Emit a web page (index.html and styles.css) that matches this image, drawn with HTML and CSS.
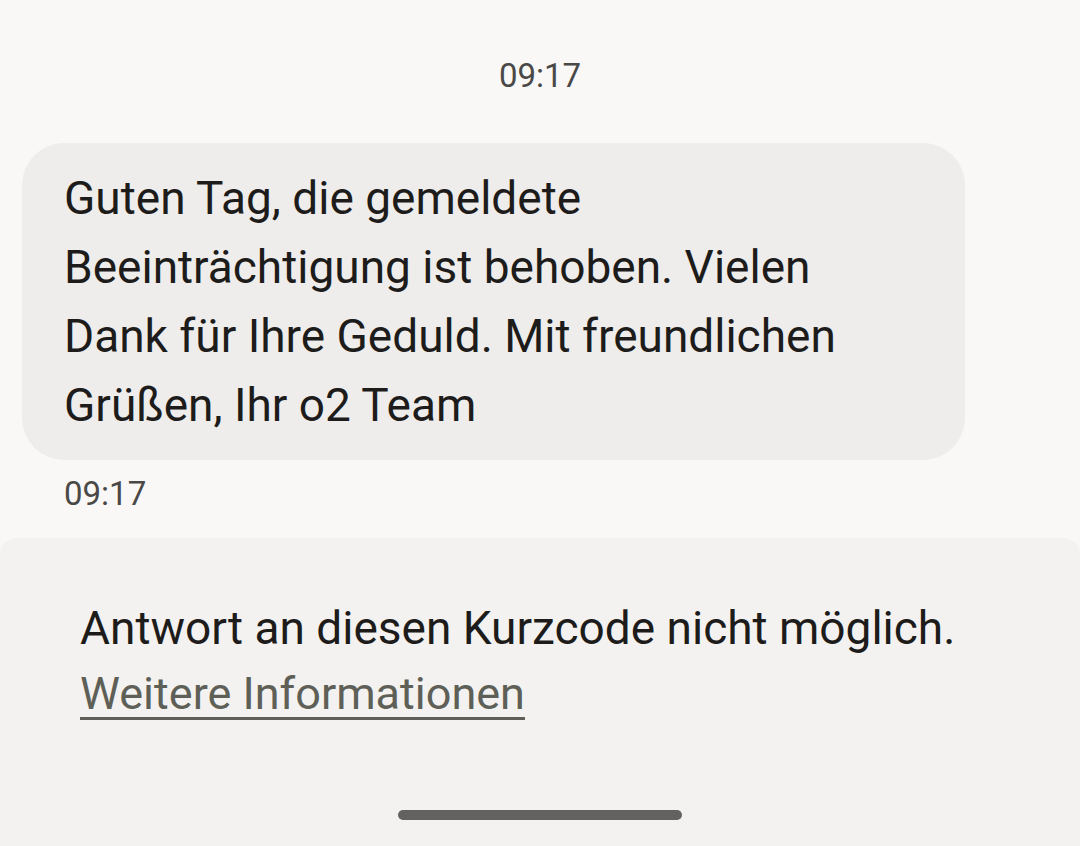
FILE: index.html
```html
<!DOCTYPE html>
<html>

<head>
    <link rel="stylesheet" href="styles.css">
</head>

<body>
    <div class="thread">
        <div class="timeHead">09:17</div>
        <div class="bubble">Guten Tag, die gemeldete<br>Beeinträchtigung ist behoben. Vielen<br>Dank für Ihre Geduld. Mit freundlichen<br>Grüßen, Ihr o2 Team</div>
        <div class="timeMsg">09:17</div>
    </div>
    <div class="panel">
        <div class="notice">Antwort an diesen Kurzcode nicht möglich.</div>
        <a class="moreLink" href="#">Weitere Informationen</a>
        <div class="handle"></div>
    </div>
</body>

</html>
```

FILE: styles.css
```css
html, body {
    margin: 0;
    height: 100%;
}

body {
    background: #f9f8f6;
    font-family: Roboto, "Noto Sans", sans-serif;
    color: #1d1c1b;
    display: flex;
    flex-direction: column;
    overflow: hidden;
}

.thread {
    flex: 1;
    padding: 0 115px 0 22px;
}

.timeHead {
    text-align: center;
    font-size: 33px;
    color: #4a4947;
    margin: 56px 0 0 93px;
    line-height: 40px;
}

.bubble {
    margin-top: 47px;
    background: #eeedeb;
    border-radius: 42px;
    padding: 21px 42px 20px 42px;
    font-size: 46px;
    line-height: 69px;
}

.timeMsg {
    font-size: 33px;
    color: #4a4947;
    margin: 14px 0 0 42px;
    line-height: 40px;
}

.panel {
    height: 308px;
    background: #f3f2f0;
    border-radius: 16px 16px 0 0;
    padding: 0 80px;
    display: flex;
    flex-direction: column;
}

.notice {
    margin-top: 62px;
    font-size: 46px;
    line-height: 56px;
}

.moreLink {
    align-self: flex-start;
    margin-top: 10px;
    font-size: 45px;
    line-height: 56px;
    color: #5e5f56;
    text-decoration: underline;
    text-decoration-thickness: 3px;
    text-underline-offset: 8px;
}

.handle {
    align-self: center;
    margin-top: auto;
    margin-bottom: 26px;
    width: 284px;
    height: 10px;
    border-radius: 5px;
    background: #636260;
}
```
